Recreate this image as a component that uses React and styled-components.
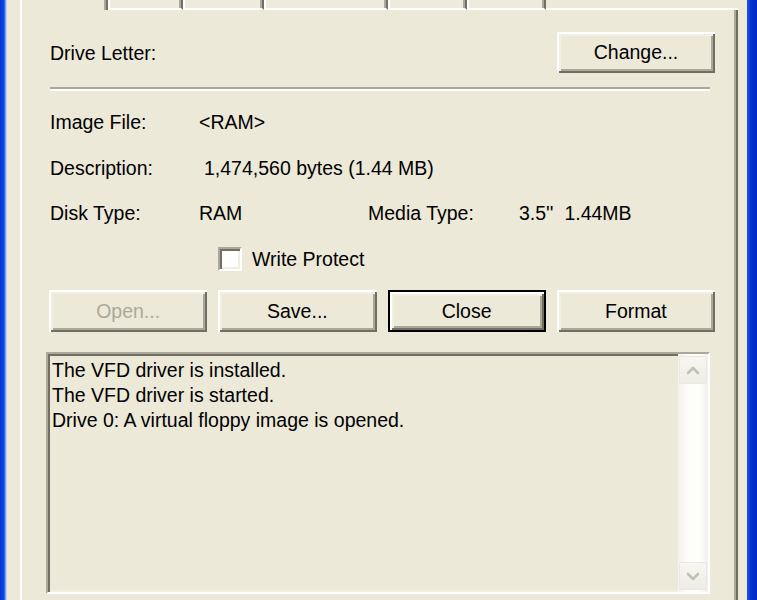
import React from "react";
import styled, { createGlobalStyle } from "styled-components";

const Global = createGlobalStyle`
  html, body { margin: 0; padding: 0; }
  body {
    background: #ECE9D8;
    overflow: hidden;
    font-family: "Liberation Sans", Arial, sans-serif;
    font-size: 19.5px;
    color: #000;
  }
`;

const Screen = styled.div`
  display: flex;
  height: 600px;
  overflow: hidden;
`;

const LeftFrame = styled.div`
  width: 7px;
  flex: none;
  background: linear-gradient(to right, #0636D0 0%, #0A46E4 55%, #6F9BF2 78%, #E6EEFC 100%);
`;

const RightFrame = styled.div`
  width: 10px;
  flex: none;
  background: linear-gradient(to right, #1F55EA 0%, #0733D6 35%, #0426C4 100%);
`;

const Dialog = styled.div`
  flex: 1;
  display: flex;
  flex-direction: column;
  padding: 0 9px 0 13px;
  min-width: 0;
`;

const TabStrip = styled.div`
  display: flex;
  height: 10px;
  flex: none;
`;

const Tab = styled.div`
  box-sizing: border-box;
  width: ${(p) => p.$w}px;
  height: 10px;
  flex: none;
  overflow: hidden;
  display: flex;
  align-items: flex-end;
  justify-content: center;
  border-left: 2px solid #FFFFFF;
  border-right: 2px solid #716F64;
  border-bottom: ${(p) => (p.$active ? "none" : "2px solid #FFFFFF")};
  box-shadow: inset -2px 0 #ACA899;
  background: ${(p) => (p.$active ? "#ECE9D8" : "#EEEBDD")};
`;

const TabLabel = styled.span`
  line-height: 24px;
  height: 24px;
  flex: none;
  white-space: nowrap;
  color: #8A887E;
  transform: translateY(${(p) => (p.$active ? "-12px" : "-8px")});
`;

const TabFiller = styled.div`
  flex: 1;
  height: 10px;
  box-sizing: border-box;
  border-bottom: 2px solid #FFFFFF;
`;

const Panel = styled.div`
  flex: 1;
  display: flex;
  flex-direction: column;
  border-left: 2px solid #FFFFFF;
  border-right: 2px solid #716F64;
  box-shadow: inset -2px 0 #ACA899;
  padding: 22px 21px 0 24px;
  min-height: 0;
`;

const TopRow = styled.div`
  display: flex;
  align-items: center;
  justify-content: space-between;
  padding-left: 4px;
`;

const Label = styled.span`
  line-height: 24px;
  white-space: pre;
  padding-left: ${(p) => p.$indent || 0}px;
`;

const Button = styled.button`
  box-sizing: border-box;
  width: ${(p) => (p.$w ? `${p.$w}px` : "100%")};
  height: ${(p) => p.$h || 42}px;
  font-family: inherit;
  font-size: 19.5px;
  color: ${(p) => (p.disabled ? "#ACA899" : "#000")};
  background: #ECE9D8;
  padding: 0;
  border-style: solid;
  border-width: ${(p) => (p.$default ? "2px" : "0")};
  border-color: #000;
  box-shadow: inset 2px 2px #FFFFFF, inset -2px -2px #716F64,
    inset 4px 4px #F1EFE2, inset -4px -4px #ACA899;
  cursor: default;
`;

const Separator = styled.div`
  margin: 14px 5px 0 4px;
  border-top: 2px solid #ACA899;
  border-bottom: 2px solid #FFFFFF;
  height: 0;
`;

const InfoGrid = styled.div`
  display: grid;
  grid-template-columns: 149px 169px 151px 1fr;
  row-gap: 21.5px;
  margin-top: 19px;
  padding-left: 4px;
`;

const CheckRow = styled.label`
  display: flex;
  align-items: center;
  gap: 10px;
  margin-top: 22px;
  padding-left: 172px;
  line-height: 24px;
`;

const CheckBox = styled.span`
  box-sizing: border-box;
  width: 24px;
  height: 24px;
  flex: none;
  background: #FFFFFF;
  border-style: solid;
  border-width: 2px;
  border-color: #ACA899 #FFFFFF #FFFFFF #ACA899;
  box-shadow: inset 2px 2px #716F64, inset -2px -2px #F1EFE2;
`;

const ButtonRow = styled.div`
  display: grid;
  grid-template-columns: repeat(4, 1fr);
  column-gap: 11px;
  margin: 19px 0 0 3px;
`;

const LogBox = styled.div`
  box-sizing: border-box;
  display: flex;
  height: 242px;
  margin: 20px 5px 0 0;
  flex: none;
  border-style: solid;
  border-width: 2px;
  border-color: #ACA899 #FFFFFF #FFFFFF #ACA899;
  box-shadow: inset 2px 2px #716F64, inset -2px -2px #F1EFE2;
  background: #ECE9D8;
`;

const LogText = styled.div`
  flex: 1;
  padding: 4px 0 0 4px;
  line-height: 25px;
  white-space: pre;
`;

const ScrollBar = styled.div`
  width: 30px;
  flex: none;
  display: flex;
  flex-direction: column;
  justify-content: space-between;
  padding: 2px 0;
  box-sizing: border-box;
  background: linear-gradient(to right, #F3F1EA 0%, #FDFDFA 35%, #FEFEFC 70%, #F2F1EB 100%);
`;

const ScrollBtn = styled.div`
  height: 28px;
  margin: 0 1px;
  box-sizing: border-box;
  border: 1px solid #E9E8E1;
  border-radius: 2px;
  background: linear-gradient(to bottom, #F7F6F1, #EDECE5);
  display: flex;
  align-items: center;
  justify-content: center;
`;

const Chevron = ({ down }) => (
  <svg width="14" height="9" viewBox="0 0 14 9">
    <polyline
      points={down ? "2,2 7,7 12,2" : "2,7 7,2 12,7"}
      fill="none"
      stroke="#C4C1B4"
      strokeWidth="2.6"
      strokeLinecap="round"
      strokeLinejoin="round"
    />
  </svg>
);

const tabs = [
  { label: "Drive0", w: 88, active: true },
  { label: "Drive1", w: 75 },
  { label: "Driver", w: 81 },
  { label: "Association", w: 124 },
  { label: "Shell", w: 79 },
  { label: "About", w: 79 },
];

export default function App() {
  return (
    <>
      <Global />
      <Screen>
        <LeftFrame />
        <Dialog>
          <TabStrip>
            {tabs.map((t) => (
              <Tab key={t.label} $w={t.w} $active={t.active}>
                <TabLabel $active={t.active}>{t.label}</TabLabel>
              </Tab>
            ))}
            <TabFiller />
          </TabStrip>
          <Panel>
            <TopRow>
              <Label>Drive Letter:</Label>
              <Button $w={158} $h={41}>Change...</Button>
            </TopRow>
            <Separator />
            <InfoGrid>
              <Label>Image File:</Label>
              <Label>{"<RAM>"}</Label>
              <span />
              <span />
              <Label>Description:</Label>
              <Label $indent={5} style={{ gridColumn: "2 / 5" }}>
                1,474,560 bytes (1.44 MB)
              </Label>
              <Label>Disk Type:</Label>
              <Label>RAM</Label>
              <Label>Media Type:</Label>
              <Label>{"3.5''  1.44MB"}</Label>
            </InfoGrid>
            <CheckRow>
              <CheckBox />
              <span>Write Protect</span>
            </CheckRow>
            <ButtonRow>
              <Button disabled>Open...</Button>
              <Button>Save...</Button>
              <Button $default>Close</Button>
              <Button>Format</Button>
            </ButtonRow>
            <LogBox>
              <LogText>
                {"The VFD driver is installed.\nThe VFD driver is started.\nDrive 0: A virtual floppy image is opened."}
              </LogText>
              <ScrollBar>
                <ScrollBtn>
                  <Chevron />
                </ScrollBtn>
                <ScrollBtn>
                  <Chevron down />
                </ScrollBtn>
              </ScrollBar>
            </LogBox>
          </Panel>
        </Dialog>
        <RightFrame />
      </Screen>
    </>
  );
}
